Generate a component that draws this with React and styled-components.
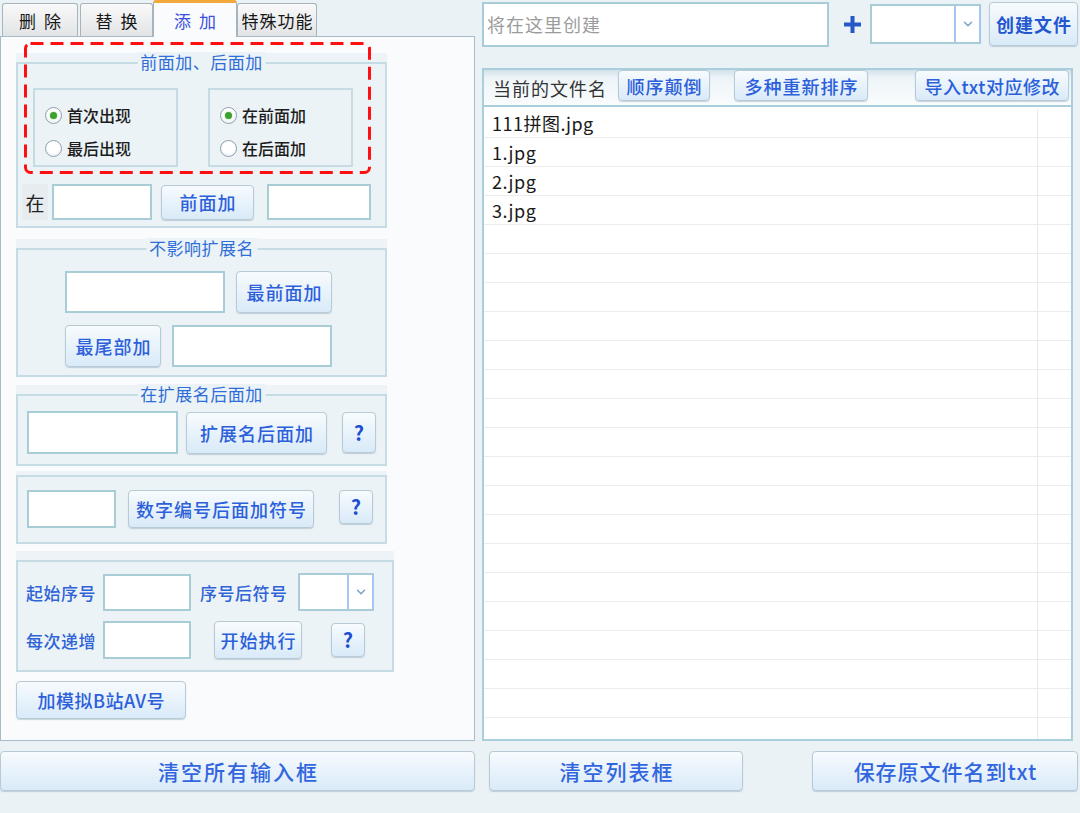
import React from "react";
import styled, { createGlobalStyle } from "styled-components";
import { ChevronDown } from "lucide-react";

const GlobalStyle = createGlobalStyle`
  * { box-sizing: border-box; }
  html, body { margin: 0; padding: 0; background: #eaf2f6; }
  body { font-family: "Noto Sans CJK SC", "Liberation Sans", sans-serif; font-weight: 500; }
  button, input { font-family: inherit; font-weight: inherit; }
`;

const Page = styled.div`
  width: 1080px;
  height: 813px;
  background: #eaf2f6;
  overflow: hidden;
`;

const Main = styled.div`
  display: flex;
  height: 741px;
`;

const LeftCol = styled.div`
  width: 475px;
  flex-shrink: 0;
  display: flex;
  flex-direction: column;
`;

const TabBar = styled.div`
  display: flex;
  align-items: flex-end;
  height: 37px;
  padding-left: 2px;
`;

const Tab = styled.div`
  position: relative;
  z-index: ${(p) => (p.$active ? 2 : 0)};
  flex-shrink: 0;
  width: ${(p) => p.$w}px;
  height: ${(p) => (p.$active ? 37 : 34)}px;
  margin-left: ${(p) => p.$ml || 0}px;
  display: flex;
  align-items: center;
  justify-content: center;
  padding-left: ${(p) => p.$ls}px;
  border: 1px solid #a7b4be;
  border-bottom: none;
  border-top: ${(p) => (p.$active ? "3px solid #f3a83c" : "1px solid #a7b4be")};
  border-radius: 3px 3px 0 0;
  background: ${(p) => (p.$active ? "#fafbfd" : "linear-gradient(#f9f9f9, #e1e3e5)")};
  color: ${(p) => (p.$active ? "#3a4ee2" : "#161616")};
  font-size: 17px;
  font-weight: 400;
  letter-spacing: ${(p) => p.$ls}px;
  white-space: nowrap;
`;

const Panel = styled.div`
  position: relative;
  z-index: 1;
  margin-top: -1px;
  height: 705px;
  background: #fafbfd;
  border: 1px solid #a7bcc8;
  padding: 16px 0 0 15px;
`;

const Annotation = styled.svg`
  position: absolute;
  left: 23px;
  top: 5px;
  z-index: 3;
  pointer-events: none;
`;

const GroupFrame = styled.div`
  width: ${(p) => p.$w || 371}px;
  margin-top: ${(p) => p.$mt || 0}px;
  padding-top: ${(p) => p.$strip ?? 9}px;
  background: linear-gradient(#edf3f7, #edf3f7) top / 100% ${(p) => p.$strip ?? 9}px no-repeat;
`;

const GroupBox = styled.div`
  position: relative;
  border: 2px solid #c5dce5;
  background: #ecf3f7;
  padding: ${(p) => p.$pad};
`;

const GroupTitle = styled.span`
  position: absolute;
  top: -12px;
  left: 50%;
  transform: translateX(-50%);
  padding: 0 3px;
  background: #ecf3f7;
  color: #2f6ed8;
  font-size: 17px;
  font-weight: 400;
  letter-spacing: 0.5px;
  line-height: 20px;
  white-space: nowrap;
`;

const Row = styled.div`
  display: flex;
  align-items: ${(p) => p.$align || "center"};
  margin-top: ${(p) => p.$mt || 0}px;
  padding-left: ${(p) => p.$pl || 0}px;
`;

const RadioBox = styled.div`
  width: 145px;
  height: 79px;
  margin-left: ${(p) => p.$ml || 0}px;
  border: 2px solid #c6dbe4;
  padding: 14px 0 0 10px;
  display: flex;
  flex-direction: column;
  gap: 11px;
`;

const RadioItem = styled.label`
  display: flex;
  align-items: center;
  gap: 5px;
  height: 22px;
  font-size: 16px;
  color: #1c1c1c;
`;

const RadioDot = styled.span`
  width: 17px;
  height: 17px;
  border-radius: 50%;
  border: 1px solid #8d9fae;
  background: radial-gradient(circle at 50% 40%, #ffffff 0, #ffffff 45%, #e1e8ee 100%);
  display: flex;
  align-items: center;
  justify-content: center;
  &::after {
    content: "";
    width: 7px;
    height: 7px;
    border-radius: 50%;
    background: ${(p) => (p.$on ? "#3c9f2f" : "transparent")};
    box-shadow: ${(p) => (p.$on ? "0 0 2px #8fd57c" : "none")};
  }
`;

const Prefix = styled.span`
  width: 26px;
  height: 36px;
  flex-shrink: 0;
  display: flex;
  align-items: center;
  justify-content: center;
  background: #e7ecef;
  font-size: 19px;
  font-weight: 400;
  color: #222;
`;

const TextBox = styled.input`
  flex-shrink: 0;
  width: ${(p) => p.$w}px;
  height: ${(p) => p.$h || 36}px;
  margin-left: ${(p) => p.$ml || 0}px;
  border: 2px solid #a9cdd6;
  background: #fff;
  outline: none;
  padding: 0 3px;
  font-size: 18px;
  font-weight: 400;
  letter-spacing: 1px;
  color: #222;
  &::placeholder {
    color: #9b9b9b;
  }
`;

const Btn = styled.button`
  flex-shrink: 0;
  width: ${(p) => p.$w}px;
  height: ${(p) => p.$h || 36}px;
  margin-left: ${(p) => p.$ml || 0}px;
  display: flex;
  align-items: center;
  justify-content: center;
  padding: 0 0 0 ${(p) => p.$ls ?? 1}px;
  border: 1px solid #b7cad5;
  border-radius: 4px;
  background: linear-gradient(#f7fbfe, #d9eaf8);
  box-shadow: 0 1px 1px rgba(110, 140, 160, 0.35);
  color: ${(p) => p.$color || "#2c60da"};
  font-size: ${(p) => p.$fs || 18}px;
  font-weight: ${(p) => (p.$bold ? 700 : 500)};
  letter-spacing: ${(p) => p.$ls ?? 1}px;
  line-height: 1;
  white-space: nowrap;
  cursor: pointer;
`;

const FieldLabel = styled.span`
  flex-shrink: 0;
  width: ${(p) => p.$w}px;
  margin-left: ${(p) => p.$ml || 0}px;
  color: #2f63d6;
  font-size: 17px;
  letter-spacing: 0.5px;
  white-space: nowrap;
`;

const Combo = styled.div`
  flex-shrink: 0;
  display: flex;
  width: ${(p) => p.$w}px;
  height: ${(p) => p.$h}px;
  margin-left: ${(p) => p.$ml || 0}px;
  border: 2px solid #a9cdd6;
  border-right-color: #a3c7f2;
  background: #fff;
`;

const ComboField = styled.div`
  flex: 1;
`;

const ComboDrop = styled.div`
  width: 25px;
  display: flex;
  align-items: center;
  justify-content: center;
  border-left: 2px solid #a3c7f2;
  color: #7ba4cc;
`;

const RightCol = styled.div`
  margin-left: 7px;
  width: 596px;
  display: flex;
  flex-direction: column;
`;

const TopRow = styled.div`
  display: flex;
  align-items: center;
  height: 48px;
`;

const PlusIcon = styled.svg`
  flex-shrink: 0;
  margin-left: 14px;
`;

const ListPanel = styled.div`
  margin-top: 20px;
  width: 591px;
  height: 673px;
  border: 2px solid #aacfdc;
  background: #fff;
  overflow: hidden;
`;

const ListHeader = styled.div`
  display: flex;
  align-items: flex-start;
  height: 37px;
  border-bottom: 2px solid #a9cfdc;
  background: linear-gradient(#d2e2ea 0%, #edf4f7 22%, #fafcfd 100%);
`;

const HeaderLabel = styled.span`
  width: 134px;
  flex-shrink: 0;
  padding-left: 9px;
  line-height: 36px;
  font-size: 18px;
  font-weight: 400;
  letter-spacing: 1px;
  color: #333;
`;

const ListBody = styled.div`
  padding-top: 2px;
`;

const ListRow = styled.div`
  display: grid;
  grid-template-columns: 553px 1fr;
  height: 29px;
  border-bottom: 1px solid #ececec;
`;

const Cell = styled.div`
  padding-left: ${(p) => (p.$side ? 0 : 8)}px;
  border-left: ${(p) => (p.$side ? "1px solid #e9e9e9" : "none")};
  line-height: 28px;
  font-size: 18px;
  font-weight: 400;
  letter-spacing: 0.5px;
  color: #1a1a1a;
  white-space: nowrap;
`;

const BottomBar = styled.div`
  display: flex;
  margin-top: 10px;
`;

const files = ["111拼图.jpg", "1.jpg", "2.jpg", "3.jpg"];
const rows = Array.from({ length: 22 }, (_, i) => files[i] || "");

function Radio({ on, children }) {
  return (
    <RadioItem>
      <RadioDot $on={on} />
      {children}
    </RadioItem>
  );
}

function Dropdown({ w, h, ml }) {
  return (
    <Combo $w={w} $h={h} $ml={ml}>
      <ComboField />
      <ComboDrop>
        <ChevronDown size={14} strokeWidth={2.6} />
      </ComboDrop>
    </Combo>
  );
}

function Help({ ml, h = 41 }) {
  return (
    <Btn $w={34} $h={h} $ml={ml} $fs={20} $ls={0} $bold $color="#1d4ed0">
      ?
    </Btn>
  );
}

export default function App() {
  return (
    <Page>
      <GlobalStyle />
      <Main>
        <LeftCol>
          <TabBar>
            <Tab $w={76} $ls={2}>删 除</Tab>
            <Tab $w={73} $ml={2} $ls={2}>替 换</Tab>
            <Tab $w={84} $ls={2} $active>添 加</Tab>
            <Tab $w={80} $ls={1}>特殊功能</Tab>
          </TabBar>
          <Panel>
            <Annotation width="347" height="132" viewBox="0 0 347 132">
              <rect x="1.5" y="1.5" width="344" height="129" rx="5" fill="none" stroke="#ff1010" strokeWidth="3" strokeDasharray="13 7" />
            </Annotation>

            <GroupFrame>
              <GroupBox $pad="24px 0 6px 4px">
                <GroupTitle>前面加、后面加</GroupTitle>
                <Row $pl={11}>
                  <RadioBox>
                    <Radio on>首次出现</Radio>
                    <Radio>最后出现</Radio>
                  </RadioBox>
                  <RadioBox $ml={30}>
                    <Radio on>在前面加</Radio>
                    <Radio>在后面加</Radio>
                  </RadioBox>
                </Row>
                <Row $mt={17}>
                  <Prefix>在</Prefix>
                  <TextBox $w={100} $ml={4} />
                  <Btn $w={93} $h={35} $ml={9}>前面加</Btn>
                  <TextBox $w={104} $ml={13} />
                </Row>
              </GroupBox>
            </GroupFrame>

            <GroupFrame $mt={11}>
              <GroupBox $pad="21px 0 8px 47px">
                <GroupTitle>不影响扩展名</GroupTitle>
                <Row>
                  <TextBox $w={160} $h={42} />
                  <Btn $w={96} $h={42} $ml={11}>最前面加</Btn>
                </Row>
                <Row $mt={12}>
                  <Btn $w={96} $h={42}>最尾部加</Btn>
                  <TextBox $w={160} $h={42} $ml={11} />
                </Row>
              </GroupBox>
            </GroupFrame>

            <GroupFrame $mt={8}>
              <GroupBox $pad="15px 0 10px 9px">
                <GroupTitle>在扩展名后面加</GroupTitle>
                <Row>
                  <TextBox $w={151} $h={43} />
                  <Btn $w={141} $h={42} $ml={8}>扩展名后面加</Btn>
                  <Help ml={15} />
                </Row>
              </GroupBox>
            </GroupFrame>

            <GroupFrame $mt={5} $strip={4}>
              <GroupBox $pad="13px 0 14px 9px">
                <Row $align="flex-start">
                  <TextBox $w={89} $h={38} />
                  <Btn $w={186} $h={38} $ml={12}>数字编号后面加符号</Btn>
                  <Help ml={25} h={34} />
                </Row>
              </GroupBox>
            </GroupFrame>

            <GroupFrame $mt={7} $w={378}>
              <GroupBox $pad="11px 0 11px 8px">
                <Row>
                  <FieldLabel $w={77}>起始序号</FieldLabel>
                  <TextBox $w={88} $h={37} />
                  <FieldLabel $w={98} $ml={9}>序号后符号</FieldLabel>
                  <Dropdown w={76} h={38} />
                </Row>
                <Row $mt={10}>
                  <FieldLabel $w={77}>每次递增</FieldLabel>
                  <TextBox $w={88} $h={38} />
                  <Btn $w={88} $h={38} $ml={23}>开始执行</Btn>
                  <Help ml={29} h={34} />
                </Row>
              </GroupBox>
            </GroupFrame>

            <Row $mt={9}>
              <Btn $w={170} $h={38} $ls={0.5}>加模拟B站AV号</Btn>
            </Row>
          </Panel>
        </LeftCol>

        <RightCol>
          <TopRow>
            <TextBox $w={347} $h={45} placeholder="将在这里创建" />
            <PlusIcon width="19" height="19" viewBox="0 0 19 19">
              <path d="M9.5 1v17M1 9.5h17" stroke="#2457c8" strokeWidth="4" />
            </PlusIcon>
            <Dropdown w={111} h={40} ml={8} />
            <Btn $w={89} $h={44} $ml={8} $bold $ls={1} $color="#2456cf">创建文件</Btn>
          </TopRow>

          <ListPanel>
            <ListHeader>
              <HeaderLabel>当前的文件名</HeaderLabel>
              <Btn $w={92} $h={31}>顺序颠倒</Btn>
              <Btn $w={134} $h={31} $ml={24}>多种重新排序</Btn>
              <Btn $w={154} $h={31} $ml={47} $ls={0.5}>导入txt对应修改</Btn>
            </ListHeader>
            <ListBody>
              {rows.map((name, i) => (
                <ListRow key={i}>
                  <Cell>{name}</Cell>
                  <Cell $side />
                </ListRow>
              ))}
            </ListBody>
          </ListPanel>
        </RightCol>
      </Main>

      <BottomBar>
        <Btn $w={475} $h={40} $fs={21} $ls={2} $color="#3266de">清空所有输入框</Btn>
        <Btn $w={254} $h={40} $ml={14} $fs={21} $ls={2} $color="#3266de">清空列表框</Btn>
        <Btn $w={266} $h={40} $ml={69} $fs={21} $ls={1} $color="#3266de">保存原文件名到txt</Btn>
      </BottomBar>
    </Page>
  );
}
